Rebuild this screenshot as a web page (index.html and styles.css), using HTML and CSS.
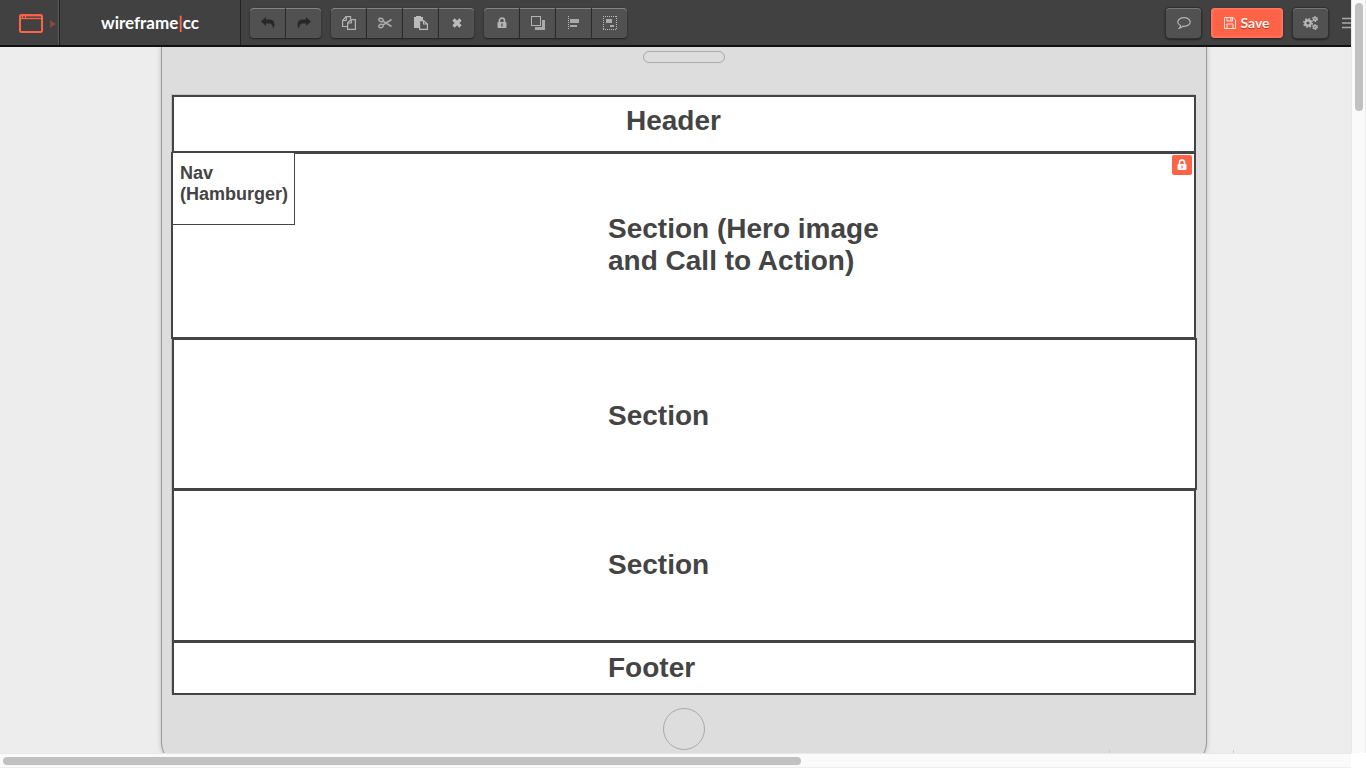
FILE: index.html
```html
<!DOCTYPE html>
<html lang="en">
<head>
<meta charset="utf-8">
<title>wireframe|cc</title>
<link rel="stylesheet" href="styles.css">
</head>
<body>
<div class="app">
  <div class="view">
    <header class="toolbar">
      <button class="device-switch" type="button" aria-label="Change device">
        <svg width="37" height="20" viewBox="0 0 37 20"><rect x="1" y="2" width="22" height="17" rx="1.500" fill="none" stroke="#ff6347" stroke-width="2"/><path d="M2 3.500h20" stroke="#a04a3c"/><path d="M2 5.500h20" stroke="#ff6347" stroke-width="1.300"/><path d="M3.500 3v2M6.500 3v2" stroke="#ff6347"/><path d="M31 7l6 4-6 4z" fill="#85493f"/></svg>
      </button>
      <a class="brand" href="#">wireframe<span class="brand-bar">|</span>cc</a>
      <div class="groups">
        <div class="group">
          <button type="button" aria-label="Undo"><svg width="14" height="12" viewBox="0 0 14 12"><path d="M0 4.500L5 0v2.500h3.500Q13.500 2.500 13.500 8q0 2-1.500 4 0-5.500-4-5.500H5V9z" fill="#282828"/></svg></button>
          <button type="button" aria-label="Redo"><svg width="14" height="12" viewBox="0 0 14 12"><path d="M14 4.500L9 0v2.500H5.500Q.5 2.500 .5 8q0 2 1.500 4 0-5.500 4-5.500h3V9z" fill="#282828"/></svg></button>
        </div>
        <div class="group">
          <button type="button" aria-label="Copy"><svg width="14" height="14" viewBox="0 0 14 14" fill="none" stroke="#b4b4b4" stroke-width="1.200"><path d="M5.500 10.500H.6V4.500L4 .6h4.500V3M.8 4.500h3.500V.8"/><path d="M5.600 7L9 3.600h4.400v9.800H5.600zM5.800 7h3.500V3.800"/></svg></button>
          <button type="button" aria-label="Cut"><svg width="14" height="12" viewBox="0 0 14 12" fill="none" stroke="#aaa" stroke-width="1.500"><ellipse cx="3" cy="3" rx="2.300" ry="1.600" transform="rotate(25 3 3)"/><ellipse cx="3" cy="9" rx="2.300" ry="1.600" transform="rotate(-25 3 9)"/><path d="M5 4l8.500 5.500M5 8l8.500-5.500"/></svg></button>
          <button type="button" aria-label="Paste"><svg width="14" height="14" viewBox="0 0 14 14"><path d="M0 1h9v3H5v8H0z" fill="#bbb"/><path d="M2 .5h5" stroke="#bbb"/><path d="M5.600 4.600h4l3.800 3.400v5.400H5.600zM9.500 4.800V8h3.800" fill="#515151" stroke="#bbb" stroke-width="1.200"/></svg></button>
          <button type="button" aria-label="Delete"><svg width="10" height="10" viewBox="0 0 10 10"><path d="M1.500 1.500l7 7M8.500 1.500l-7 7" stroke="#bbb" stroke-width="3.200"/></svg></button>
        </div>
        <div class="group">
          <button type="button" aria-label="Lock"><svg width="10" height="12" viewBox="0 0 10 12"><path d="M2.500 6V3.500a2.500 2.500 0 0 1 5 0V6" fill="none" stroke="#b4b4b4" stroke-width="1.700"/><rect x=".5" y="5" width="9" height="6" rx="1" fill="#b4b4b4"/><path d="M5 6.500v3" stroke="#515151" stroke-width="1.300"/></svg></button>
          <button type="button" aria-label="Arrange layers"><svg width="14" height="14" viewBox="0 0 14 14"><path d="M11 4h3v10H4v-3h7z" fill="#aaa"/><rect x=".5" y=".5" width="9" height="9" fill="none" stroke="#b4b4b4"/></svg></button>
          <button type="button" aria-label="Align"><svg width="12" height="14" viewBox="0 0 12 14" fill="#aaa"><path d="M.5 0v14" stroke="#bbb" stroke-dasharray="1 1"/><rect x="2" y="3" width="9" height="4"/><rect x="2" y="9" width="7" height="2"/></svg></button>
          <button type="button" aria-label="Group"><svg width="14" height="14" viewBox="0 0 14 14" fill="#aaa"><path d="M0 .5h14M0 13.500h14M.5 0v14M13.500 0v14" stroke="#bbb" stroke-dasharray="1 1"/><rect x="3" y="3" width="6" height="4"/><rect x="7" y="9" width="4" height="2"/></svg></button>
        </div>
      </div>
      <div class="actions">
        <button class="single" type="button" aria-label="Comments"><svg width="14" height="12" viewBox="0 0 14 12"><path d="M7 .7c3.500 0 6.200 1.900 6.200 4.300S10.500 9.300 7 9.300L5.800 9.200Q4.500 11 2.300 11.200 3.500 10 3.500 8.500C1.800 7.700.8 6.500.8 5 .8 2.600 3.500.7 7 .7z" fill="none" stroke="#b4b4b4" stroke-width="1.200"/></svg></button>
        <button class="save" type="button"><svg width="12" height="12" viewBox="0 0 12 12" fill="none" stroke="#ffe3dc"><path d="M.5.5h8.700l2.300 2.300v8.700H.5z"/><path d="M3 .5v3.500h5.500V.5M3 11.500V7h6v4.500"/><path d="M6.800 1v2.500" stroke-width="1.300"/></svg>Save</button>
        <button class="single" type="button" aria-label="Settings"><svg width="15" height="14" viewBox="0 0 15 14" fill="none" stroke="#b8b8b8"><circle cx="5" cy="7" r="2.700" stroke-width="2.200"/><circle cx="5" cy="7" r="4.200" stroke-width="1.600" stroke-dasharray="1.650 1.650"/><circle cx="12" cy="3" r="1.500" stroke-width="1.400"/><circle cx="12" cy="3" r="2.400" stroke-width="1.100" stroke-dasharray="1.200 1.200"/><circle cx="12" cy="11" r="1.500" stroke-width="1.400"/><circle cx="12" cy="11" r="2.400" stroke-width="1.100" stroke-dasharray="1.200 1.200"/></svg></button>
        <button class="menu" type="button" aria-label="Menu"><svg width="12" height="12" viewBox="0 0 12 12"><path d="M0 1.500h12M0 6h12M0 10.500h12" stroke="#aaa" stroke-width="1.600"/></svg></button>
      </div>
    </header>
    <main class="canvas">
      <div class="device">
        <div class="speaker"></div>
        <div class="screen">
          <section class="box box-header"><h2>Header</h2></section>
          <section class="box box-hero">
            <h2>Section (Hero image<br>and Call to Action)</h2>
            <div class="box-nav">Nav<br>(Hamburger)</div>
            <button class="lock" type="button" aria-label="Unlock section"><svg width="10" height="12" viewBox="0 0 10 12"><path d="M2.500 6V3.500a2.500 2.500 0 0 1 5 0V6" fill="none" stroke="#fff" stroke-width="1.600"/><rect x=".5" y="5" width="9" height="6" rx="1" fill="#fff"/><path d="M5 6.500v3" stroke="#ff6347" stroke-width="1.200"/></svg></button>
          </section>
          <section class="box box-first"><h2>Section</h2></section>
          <section class="box box-second"><h2>Section</h2></section>
          <section class="box box-footer"><h2>Footer</h2></section>
        </div>
        <div class="home"></div>
      </div>
      <div class="ticks"></div>
    </main>
  </div>
  <div class="track track-y"><div class="thumb thumb-y"></div></div>
  <div class="track track-x"><div class="thumb thumb-x"></div></div>
</div>
</body>
</html>
```
FILE: styles.css
```css
* { box-sizing: border-box; }
body { margin: 0; background: #fff; color: #444; font-family: "Liberation Sans", Arial, sans-serif; }
button { margin: 0; padding: 0; border: 0; background: none; cursor: pointer; }
svg { display: block; }

.app { display: grid; grid-template-columns: minmax(0, 1fr) 15px; grid-template-rows: minmax(0, 1fr) 15px; height: 100vh; overflow: hidden; }
.view { display: flex; flex-direction: column; min-height: 0; overflow: hidden; background: #ededed; }

.toolbar { display: flex; flex: none; height: 47px; background: #414141; border-bottom: 2px solid #111; overflow: hidden; }
.device-switch { display: flex; align-items: center; width: 60px; padding-left: 19px; border-right: 1px solid #222; box-shadow: inset -1px 0 #5a5a5a; }
.brand { display: flex; align-items: center; justify-content: center; width: 181px; border-right: 1px solid #222; color: #fff; font: bold 17px/20px Lato, sans-serif; text-decoration: none; }
.brand-bar { color: #ff6347; }
.groups, .actions { display: flex; align-items: center; gap: 10px; }
.groups { padding-left: 9px; }
.actions { flex: none; margin-left: auto; }
.group { display: flex; height: 30px; }
.group button, .single { display: flex; align-items: center; justify-content: center; width: 36px; height: 30px; background: #515151; border-right: 1px solid #303030; box-shadow: inset 0 1px #858585, 0 1px 2px #222; }
.group button:first-child { border-radius: 4px 0 0 4px; }
.group button:last-child { width: 35px; border-right: 0; border-radius: 0 4px 4px 0; }
.single { width: 35px; border: 0; border-radius: 4px; box-shadow: inset 0 1px #777, 0 0 0 1px #303030, 0 1px 2px 1px #222; }
.save { display: flex; align-items: center; justify-content: center; gap: 4px; width: 72px; height: 30px; border-radius: 4px; background: #ff6347; box-shadow: inset 0 0 3px #ff9c8a, 0 1px 2px #222; color: #ffefeb; font: bold 14px/20px Lato, sans-serif; text-shadow: 0 1px 1px #a83d2a; }
.menu { width: 9px; margin-left: 4px; overflow: hidden; }

.canvas { position: relative; flex: 1; min-height: 0; padding: 0 144px 0 161px; overflow: hidden; }
.device { padding: 4px 10px 16px; border: 1px solid #999; border-top: 0; border-radius: 0 0 25px 25px; background: #ddd; box-shadow: 0 0 5px #bbb; }
.speaker { width: 82px; height: 12px; margin: 0 auto; border: 1px solid #aaa; border-radius: 6px; }
.screen { margin-top: 32px; background: #fff; box-shadow: -1px -1px #c4c4c4; }
.home { width: 42px; height: 42px; margin: 13px auto 0; border: 1px solid #aaa; border-radius: 50%; }
.ticks { position: absolute; right: 117px; bottom: 0; width: 125px; height: 3px; border: solid #ccc; border-width: 0 1px; }

.box { position: relative; padding-left: 434px; border: 2px solid #444; background: #fff; }
.box + .box { margin-top: -1px; }
.box h2 { margin: 0; font-size: 28px; line-height: 32px; }
.box-header { padding: 8px 0 14px 452px; }
.box-hero { margin-left: -1px; padding: 59px 0 60px 435px; }
.box-first { margin-right: -1px; padding-top: 60px; padding-bottom: 56px; }
.box-second { padding-top: 58px; padding-bottom: 59px; }
.box-footer { padding-top: 9px; padding-bottom: 9px; }
.box-nav { position: absolute; top: -2px; left: -1px; padding: 10px 6px 19px 7px; border: 1px solid #444; background: #fff; font-size: 18px; font-weight: bold; line-height: 21px; }
.lock { position: absolute; top: 1px; right: 2px; display: flex; align-items: center; justify-content: center; width: 20px; height: 20px; border-radius: 2px; background: #ff6347; }

.track { background: #fafafa; }
.track-y { border-left: 1px solid #e8e8e8; border-right: 1px solid #eee; padding: 3px 2px 0 3px; }
.track-x { border-top: 1px solid #e8e8e8; border-bottom: 1px solid #eee; padding: 3px 0 0 3px; }
.thumb { border-radius: 4px; background: #c1c1c1; }
.thumb-y { width: 8px; height: 108px; }
.thumb-x { width: 59.2%; height: 8px; }
```
